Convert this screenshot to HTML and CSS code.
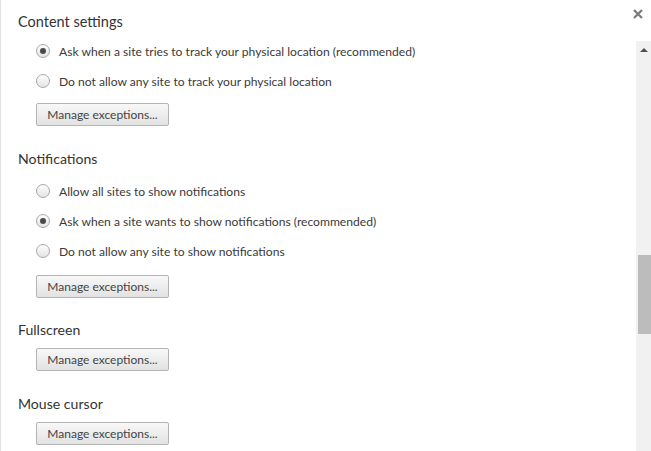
FILE: index.html
```html
<!DOCTYPE html>
<html lang="en">
<head>
  <meta charset="UTF-8">
  <title>Content settings</title>
  <link rel="stylesheet" href="styles.css">
</head>
<body>
  <div class="overlay">
    <div class="page">
      <h1>Content settings</h1>

      <!-- Location -->
      <div class="options">
        <label class="radio-row"><span class="radio checked"></span>Ask when a site tries to track your physical location (recommended)</label>
        <label class="radio-row"><span class="radio"></span>Do not allow any site to track your physical location</label>
      </div>
      <button class="btn">Manage exceptions...</button>

      <!-- Notifications -->
      <div class="section">
        <h2>Notifications</h2>
        <div class="options options-wide">
          <label class="radio-row"><span class="radio"></span>Allow all sites to show notifications</label>
          <label class="radio-row"><span class="radio checked"></span>Ask when a site wants to show notifications (recommended)</label>
          <label class="radio-row"><span class="radio"></span>Do not allow any site to show notifications</label>
        </div>
        <button class="btn btn-low">Manage exceptions...</button>
      </div>

      <div class="section section-tight">
        <h2>Fullscreen</h2>
        <button class="btn">Manage exceptions...</button>
      </div>

      <div class="section">
        <h2>Mouse cursor</h2>
        <button class="btn">Manage exceptions...</button>
      </div>
    </div>

    <div class="scrollbar">
      <div class="arrow-up"></div>
      <div class="track-top"></div>
      <div class="thumb"></div>
    </div>

    <button class="close" title="Close">
      <svg width="10" height="10" viewBox="0 0 10 10">
        <path d="M1 1 L9 9 M9 1 L1 9" stroke="#7a7a7a" stroke-width="2.2"/>
      </svg>
    </button>
  </div>
</body>
</html>
```

FILE: styles.css
```css
body {
  margin: 0;
  background-color: white;
  font-family: Lato, "Noto Sans", sans-serif;
  color: #333;
  overflow: hidden;
}

.overlay {
  position: relative;
  display: flex;
  height: 451px;
  border-left: 1px solid #e2e2e2;
}

.page {
  flex: 1;
  padding-left: 17px;
  padding-top: 12px;
}

h1 {
  margin: 0;
  font-size: 14.5px;
  font-weight: normal;
  line-height: 20px;
  color: #333;
}

h2 {
  margin: 0;
  font-size: 14.1px;
  font-weight: normal;
  line-height: 20px;
  color: #333;
}

.section {
  margin-top: 23px;
}
.section-tight {
  margin-top: 22px;
}

.options {
  margin-top: 4px;
  padding-left: 18px;
}
.options-wide {
  margin-top: 7px;
}

.radio-row {
  display: flex;
  align-items: center;
  gap: 9px;
  height: 30px;
  font-size: 12.1px;
  color: #3a3a3a;
}

.radio {
  box-sizing: border-box;
  width: 14px;
  height: 14px;
  border-radius: 50%;
  border: 1px solid #a8a8a8;
  background: linear-gradient(#fdfdfd, #e4e4e4);
  display: flex;
  align-items: center;
  justify-content: center;
}
.radio.checked::after {
  content: "";
  width: 6px;
  height: 6px;
  border-radius: 50%;
  background-color: #4a4a4a;
}

.btn {
  display: block;
  box-sizing: border-box;
  margin: 7px 0 0 18px;
  width: 133px;
  height: 23px;
  padding: 0;
  font-family: inherit;
  font-size: 12px;
  color: #444;
  border: 1px solid #b4b4b4;
  border-radius: 2px;
  background: linear-gradient(#f8f8f8, #e2e2e2);
}
.btn-low {
  margin-top: 9px;
}
.section-tight .btn,
.section:last-child .btn {
  margin-top: 8px;
}

.scrollbar {
  width: 15px;
  margin-top: 41px;
  background-color: #f1f1f1;
  display: flex;
  flex-direction: column;
  align-items: flex-end;
}
.arrow-up {
  align-self: center;
  margin-top: 7px;
  width: 0;
  height: 0;
  border-left: 4px solid transparent;
  border-right: 4px solid transparent;
  border-bottom: 4px solid #505050;
}
.track-top {
  height: 203px;
}
.thumb {
  width: 13px;
  height: 79px;
  background-color: #bcbcbc;
}

.close {
  position: absolute;
  top: 9px;
  right: 8px;
  padding: 0;
  border: none;
  background: none;
  line-height: 0;
}
```
